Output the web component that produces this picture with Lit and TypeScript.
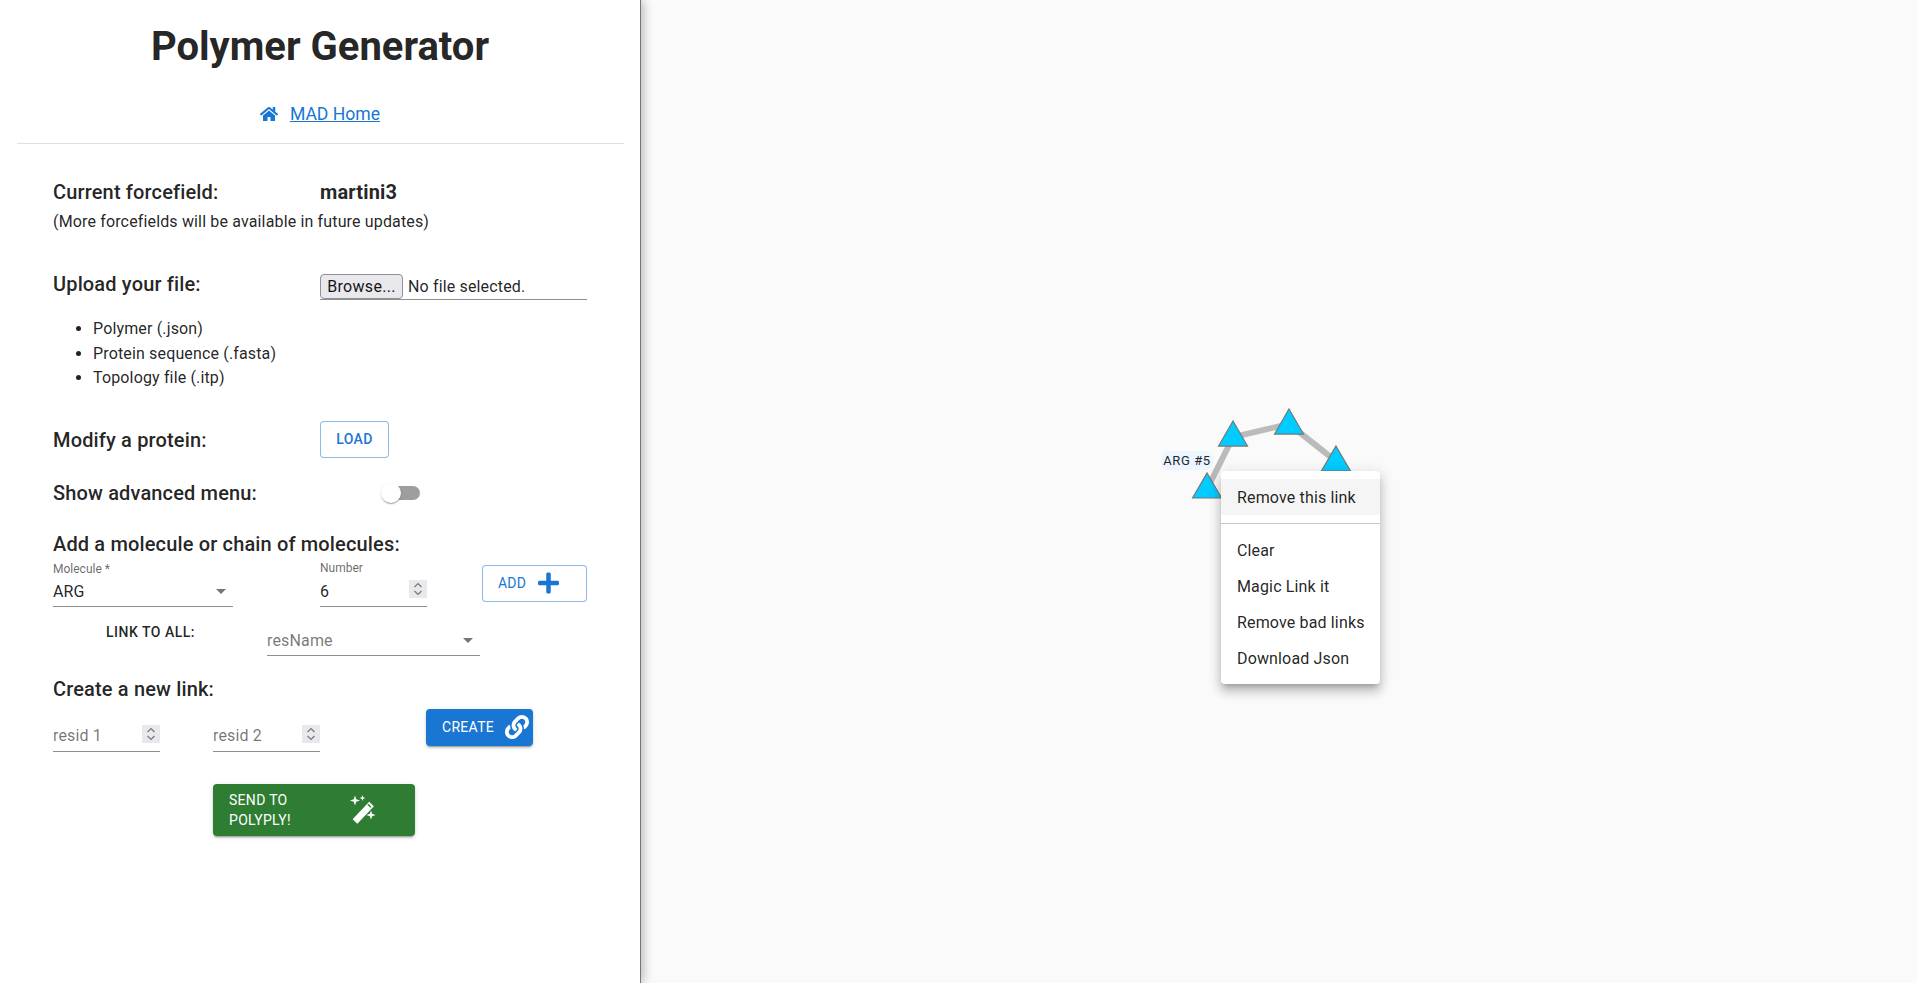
import { LitElement, html, css, svg } from "lit";
import { customElement } from "lit/decorators.js";

const HOME = "M280.37 148.26L96 300.11V464a16 16 0 0 0 16 16l112.06-.29a16 16 0 0 0 15.92-16V368a16 16 0 0 1 16-16h64a16 16 0 0 1 16 16v95.64a16 16 0 0 0 16 16.05L464 480a16 16 0 0 0 16-16V300L295.67 148.26a12.19 12.19 0 0 0-15.3 0zM571.6 251.47L488 182.56V44.05a12 12 0 0 0-12-12h-56a12 12 0 0 0-12 12v72.61L318.47 43a48 48 0 0 0-61 0L4.34 251.47a12 12 0 0 0-1.6 16.9l25.5 31A12 12 0 0 0 45.15 301l235.22-193.74a12.19 12.19 0 0 1 15.3 0L530.9 301a12 12 0 0 0 16.9-1.6l25.5-31a12 12 0 0 0-1.7-16.93z";
const PLUS = "M416 208H272V64c0-17.67-14.33-32-32-32h-32c-17.67 0-32 14.33-32 32v144H32c-17.67 0-32 14.33-32 32v32c0 17.67 14.33 32 32 32h144v144c0 17.67 14.33 32 32 32h32c17.67 0 32-14.33 32-32V304h144c17.67 0 32-14.33 32-32v-32c0-17.67-14.33-32-32-32z";
const LINK = "M326.612 185.391c59.747 59.809 58.927 155.698.36 214.59-.11.12-.24.25-.36.37l-67.2 67.2c-59.27 59.27-155.699 59.262-214.96 0-59.27-59.26-59.27-155.7 0-214.96l37.106-37.106c9.84-9.84 26.786-3.3 27.294 10.606.648 17.722 3.826 35.527 9.69 52.721 1.986 5.822.567 12.262-3.783 16.612l-13.087 13.087c-28.026 28.026-28.905 73.66-1.155 101.96 28.024 28.579 74.086 28.749 102.325.51l67.2-67.19c28.191-28.191 28.073-73.757 0-101.83-3.701-3.694-7.429-6.564-10.341-8.569a16.037 16.037 0 0 1-6.947-12.606c-.396-10.567 3.348-21.456 11.698-29.806l21.054-21.055c5.521-5.521 14.182-6.199 20.584-1.731a152.482 152.482 0 0 1 20.522 17.197zM467.547 44.449c-59.261-59.262-155.69-59.27-214.96 0l-67.2 67.2c-.12.12-.25.25-.36.37-58.566 58.892-59.387 154.781.36 214.59a152.454 152.454 0 0 0 20.521 17.196c6.402 4.468 15.064 3.789 20.584-1.731l21.054-21.055c8.35-8.35 12.094-19.239 11.698-29.806a16.037 16.037 0 0 0-6.947-12.606c-2.912-2.005-6.64-4.875-10.341-8.569-28.073-28.073-28.191-73.639 0-101.83l67.2-67.19c28.239-28.239 74.3-28.069 102.325.51 27.75 28.3 26.872 73.934-1.155 101.96l-13.087 13.087c-4.35 4.35-5.769 10.79-3.783 16.612 5.864 17.194 9.042 34.999 9.69 52.721.509 13.906 17.454 20.446 27.294 10.606l37.106-37.106c59.271-59.259 59.271-155.699.001-214.959z";

const spin = html`<svg class="spin" viewBox="0 0 18 18"><path d="M5.5 7 9 3.5 12.5 7M5.5 11 9 14.5 12.5 11" fill="none" stroke="#777" stroke-width="1.2"/></svg>`;
const star = (x: number, y: number, r: number) => {
  const k = r * 0.25;
  return svg`<path d="M${x} ${y - r}L${x + k} ${y - k}L${x + r} ${y}L${x + k} ${y + k}L${x} ${y + r}L${x - k} ${y + k}L${x - r} ${y}L${x - k} ${y - k}Z" fill="#fff"/>`;
};
const tri = (x: number, top: number) => svg`<path d="M${x} ${top}L${x + 14.5} ${top + 25}H${x - 14.5}Z" fill="#0cf" stroke="#777" stroke-width="1.2"/>`;

@customElement("app-root")
export class AppRoot extends LitElement {
  static styles = css`
    :host { display: block; height: 983px; overflow: hidden; font-family: Roboto, sans-serif; color: rgba(0,0,0,.87); font-size: 16px; letter-spacing: .15px; }
    * { box-sizing: border-box; }
    .page { display: flex; height: 983px; }
    .panel { width: 641px; flex: none; background: #fff; border-right: 1px solid #777; box-shadow: 2px 0 10px rgba(0,0,0,.28); position: relative; z-index: 1; }
    h1 { margin: 0; height: 92px; padding-top: 2px; display: flex; align-items: center; justify-content: center; font-size: 40px; font-weight: 700; line-height: 1; letter-spacing: 0; }
    .home { height: 42px; padding-top: 2px; display: flex; align-items: center; justify-content: center; gap: 12px; font-size: 17.6px; letter-spacing: 0; }
    .home svg { width: 18px; height: 16px; fill: #1976d2; }
    .home a { color: #1976d2; text-decoration: underline; }
    hr { margin: 9px 16px 0 17px; border: 0; border-top: 1px solid #e0e0e0; }
    .form { padding: 32px 53px 0; }
    .h { font-size: 20px; font-weight: 500; line-height: 32px; }
    .val-b { font-weight: 700; }
    .row2 { display: grid; grid-template-columns: 267px 1fr; align-items: center; }
    .note { line-height: 24px; margin-top: 2px; }
    .upload { margin-top: 34px; }
    .file { display: flex; align-items: center; gap: 5px; height: 26px; border-bottom: 1px solid #8f8f8f; margin-top: 6px; }
    .file button { font: 16px Roboto, sans-serif; letter-spacing: .3px; height: 25px; width: 83px; padding: 0; color: #15141a; background: #e9e9ed; border: 1px solid #8f8f9d; border-radius: 4px; }
    ul { margin: 17px 0 0; padding-left: 40px; }
    li { line-height: 24.5px; }
    .btn { display: inline-flex; align-items: center; font-size: 14px; font-weight: 500; letter-spacing: .4px; text-transform: uppercase; border-radius: 4px; }
    .outlined { border: 1px solid rgba(25,118,210,.5); color: #1976d2; background: #fff; }
    .contained { color: #fff; box-shadow: 0 3px 1px -2px rgba(0,0,0,.2), 0 2px 2px 0 rgba(0,0,0,.14), 0 1px 5px 0 rgba(0,0,0,.12); }
    .load { width: 69px; height: 37px; justify-content: center; }
    .loadwrap { margin-top: -2px; }
    .modify { margin-top: 32px; }
    .adv { margin-top: 19px; }
    .switch { margin-left: 61px; width: 39px; height: 20px; position: relative; display: block; }
    .track { position: absolute; left: 5px; right: 0; top: 3px; height: 14px; border-radius: 7px; background: #9e9e9e; }
    .thumb { position: absolute; left: 0; top: 0; width: 20px; height: 20px; border-radius: 50%; background: #fff; box-shadow: 0 2px 1px -1px rgba(0,0,0,.2), 0 1px 1px 0 rgba(0,0,0,.14), 0 1px 3px 0 rgba(0,0,0,.12); }
    .addh { margin-top: 19px; }
    .fields { display: flex; align-items: flex-start; }
    .field { position: relative; border-bottom: 1px solid #8f8f8f; }
    .lab { display: block; font-size: 12px; line-height: 16px; color: rgba(0,0,0,.6); letter-spacing: 0; }
    .mol .lab { padding-top: 1px; margin-bottom: -1px; }
    .val { display: flex; align-items: center; justify-content: space-between; height: 30px; }
    .mol .val, .num .val, .res .val { padding-top: 2px; }
    .ph { color: rgba(0,0,0,.55); }
    .arrow { width: 0; height: 0; border: 5px solid transparent; border-top-color: rgba(0,0,0,.54); border-bottom: 0; margin-right: 7px; }
    .spin { width: 18px; height: 18px; background: #e9e9ed; display: block; margin-top: -3px; }
    .num .spin { margin-top: -5px; }
    .mol { width: 180px; margin-right: 87px; }
    .num { width: 107px; margin-right: 55px; }
    .add { width: 105px; height: 37px; margin-top: 5px; padding-left: 15px; letter-spacing: .2px; font-weight: 400; }
    .add svg { width: 21px; height: 24px; fill: #1976d2; margin-left: 12px; }
    .linkall { display: flex; align-items: flex-start; }
    .linklab { width: 214px; padding-left: 53px; padding-top: 15px; font-size: 14px; font-weight: 500; line-height: 20px; text-transform: uppercase; letter-spacing: .5px; }
    .res { width: 213px; margin-top: 18px; }
    .newh { margin-top: 17px; }
    .r1 { width: 107px; margin: 16px 53px 0 0; }
    .r2 { width: 107px; margin: 16px 106px 0 0; }
    .create { width: 107px; height: 37px; margin-top: 4px; padding-left: 16px; background: #1976d2; font-weight: 400; letter-spacing: .3px; }
    .create svg { width: 24px; height: 24px; fill: #fff; margin-left: 11px; flex: none; }
    .send { margin: 32px 0 0 160px; width: 202px; height: 52px; padding-left: 16px; background: #2e7d32; font-weight: 400; line-height: 20px; letter-spacing: .3px; }
    .send span { width: 116px; flex: none; }
    .send svg { width: 36px; height: 36px; flex: none; }
    .canvas { flex: 1; background: #fafafa; position: relative; }
    .graph { position: absolute; inset: 0; width: 100%; height: 100%; }
    .tag { position: absolute; left: 520px; top: 451px; width: 52px; height: 19px; border-radius: 8px; background: #edf5ff; font-size: 13px; line-height: 19px; text-align: center; letter-spacing: .6px; color: #1c2733; white-space: nowrap; }
    .menu { position: absolute; left: 580px; top: 471px; width: 159px; padding: 8px 0; background: #fff; border-radius: 4px; box-shadow: 0 5px 5px -3px rgba(0,0,0,.2), 0 8px 10px 1px rgba(0,0,0,.14), 0 3px 14px 2px rgba(0,0,0,.12); }
    .item { height: 36px; padding: 0 16px; display: flex; align-items: center; white-space: nowrap; }
    .item.on { background: #f5f5f5; }
    .sep { border-top: 1px solid #c8c8c8; margin: 8px 0 8px; }
  `;

  render() {
    return html`<div class="page">
      <section class="panel">
        <h1>Polymer Generator</h1>
        <div class="home"><svg viewBox="0 0 576 512"><path d=${HOME}></path></svg><a href="#">MAD Home</a></div>
        <hr />
        <div class="form">
          <div class="row2 h"><span>Current forcefield:</span><span class="val-b">martini3</span></div>
          <div class="note">(More forcefields will be available in future updates)</div>
          <div class="row2 upload">
            <span class="h">Upload your file:</span>
            <div class="file"><button>Browse...</button><span>No file selected.</span></div>
          </div>
          <ul><li>Polymer (.json)</li><li>Protein sequence (.fasta)</li><li>Topology file (.itp)</li></ul>
          <div class="row2 modify">
            <span class="h">Modify a protein:</span>
            <div class="loadwrap"><span class="btn outlined load">Load</span></div>
          </div>
          <div class="row2 adv">
            <span class="h">Show advanced menu:</span>
            <span class="switch"><span class="track"></span><span class="thumb"></span></span>
          </div>
          <div class="h addh">Add a molecule or chain of molecules:</div>
          <div class="fields">
            <div class="field mol"><span class="lab">Molecule *</span><div class="val">ARG<i class="arrow"></i></div></div>
            <div class="field num"><span class="lab">Number</span><div class="val">6${spin}</div></div>
            <span class="btn outlined add">Add<svg viewBox="0 0 448 512"><path d=${PLUS}></path></svg></span>
          </div>
          <div class="linkall">
            <div class="linklab">Link to all:</div>
            <div class="field res"><div class="val ph">resName<i class="arrow"></i></div></div>
          </div>
          <div class="h newh">Create a new link:</div>
          <div class="fields">
            <div class="field r1"><div class="val ph">resid 1${spin}</div></div>
            <div class="field r2"><div class="val ph">resid 2${spin}</div></div>
            <span class="btn contained create">Create<svg viewBox="0 0 512 512"><path d=${LINK}></path></svg></span>
          </div>
          <span class="btn contained send"><span>Send to<br />Polyply!</span><svg viewBox="0 0 36 36">
            ${star(10, 8.5, 5)}${star(17.5, 6, 3)}${star(26, 23, 4.6)}
            <path d="M10 29.5 26.5 12" stroke="#fff" stroke-width="6.5"/>
            <path d="M22.8 12.3l3.2 3" stroke="#2e7d32" stroke-width="1.4"/>
          </svg></span>
        </div>
      </section>
      <section class="canvas">
        <svg class="graph" viewBox="640 0 1277 983">
          <polyline points="1206.5,489 1232.5,437 1288.5,424 1335.5,461 1350,480" fill="none" stroke="#bbb" stroke-width="6"/>
          ${tri(1206.5, 473)}${tri(1232.5, 421)}${tri(1288.5, 409)}${tri(1335.5, 446)}
        </svg>
        <div class="tag">ARG #5</div>
        <div class="menu">
          <div class="item on">Remove this link</div>
          <div class="sep"></div>
          <div class="item">Clear</div>
          <div class="item">Magic Link it</div>
          <div class="item">Remove bad links</div>
          <div class="item">Download Json</div>
        </div>
      </section>
    </div>`;
  }
}
